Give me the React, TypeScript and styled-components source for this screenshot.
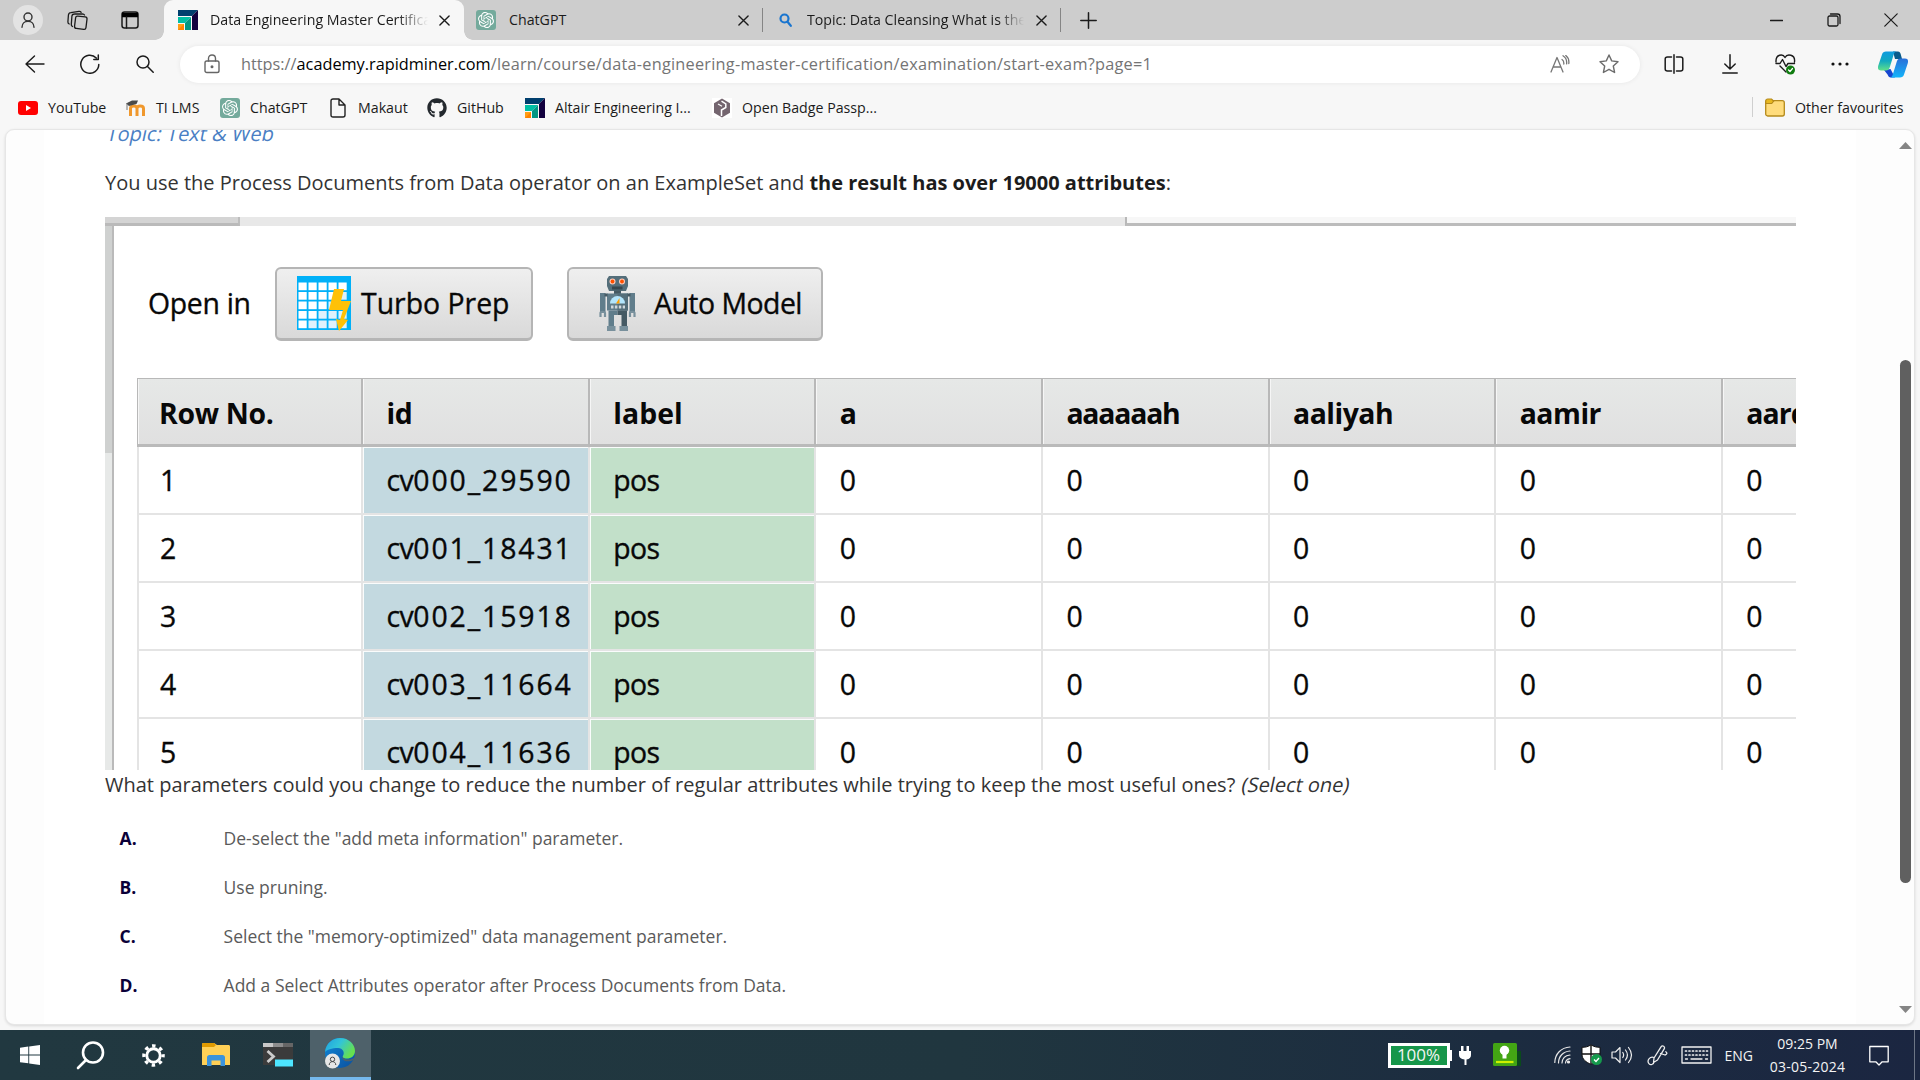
import React from "react";
import styled, { createGlobalStyle } from "styled-components";
import { SiOpenai } from "react-icons/si";
import { FaGithub } from "react-icons/fa";

const GlobalStyle = createGlobalStyle`
  * { box-sizing: border-box; }
  html, body { margin: 0; padding: 0; overflow: hidden; }
  body { font-family: "Open Sans", "Noto Sans", sans-serif; color: #1b1b1b; }
  svg { display: block; flex: none; }
`;

const Screen = styled.div`
  width: 1920px;
  height: 1080px;
  display: flex;
  flex-direction: column;
  background: #f7f7f7;
  overflow: hidden;
`;

/* ---------- tab strip ---------- */
const TabStrip = styled.div`
  height: 40px;
  display: flex;
  background: #cdcdcd;
`;
const StripTools = styled.div`
  width: 164px;
  height: 40px;
  display: flex;
  align-items: center;
  padding-left: 13px;
`;
const Avatar = styled.div`
  width: 30px;
  height: 30px;
  border-radius: 50%;
  background: #e3e3e3;
  display: grid;
  place-items: center;
`;
const Spacer = styled.div<{ $w: number }>`
  flex: none;
  width: ${(p) => p.$w}px;
`;
const Grow = styled.div`
  flex: 1;
`;
const Tab = styled.div<{ $w: number; $active?: boolean }>`
  width: ${(p) => p.$w}px;
  height: 40px;
  padding-left: ${(p) => (p.$active ? 14 : 12)}px;
  display: flex;
  align-items: center;
  font-size: 14.2px;
  background: ${(p) => (p.$active ? "#f7f7f7" : "transparent")};
  border-radius: 9px 9px 0 0;
`;
const TabLabel = styled.div<{ $w: number; $fade?: string }>`
  width: ${(p) => p.$w}px;
  line-height: 40px;
  white-space: nowrap;
  overflow: hidden;
  ${(p) => p.$fade && `mask-image: linear-gradient(to right, #000 ${p.$fade}, transparent);`}
`;
const StripFoot = styled.div`
  flex: none;
  width: 0;
  height: 40px;
  display: flex;
  align-items: flex-end;
`;
const Flare = styled.div<{ $side: "left" | "right" }>`
  flex: none;
  width: 9px;
  height: 9px;
  margin-left: ${(p) => (p.$side === "left" ? -9 : 0)}px;
  background: radial-gradient(
    circle at ${(p) => (p.$side === "left" ? "0 0" : "100% 0")},
    transparent 8.5px,
    #f7f7f7 9px
  );
`;
const TabRule = styled.div`
  width: 1px;
  height: 24px;
  align-self: center;
  background: #858585;
`;

/* ---------- toolbar ---------- */
const Toolbar = styled.div`
  height: 48px;
  padding: 0 12px 0 25px;
  display: flex;
  align-items: center;
`;
const AddressBar = styled.div`
  width: 1460px;
  height: 37px;
  border-radius: 19px;
  background: #fff;
  box-shadow: 0 0 5px rgba(0, 0, 0, 0.07);
  display: flex;
  align-items: center;
  padding: 0 21px 0 24px;
`;
const Url = styled.div`
  flex: 1;
  margin-left: 21px;
  font-size: 16.3px;
  line-height: 36px;
  white-space: nowrap;
  color: #747474;
`;
const Host = styled.span`
  color: #000;
`;
const UrlPath = styled.span`
  letter-spacing: 0.24px;
`;

/* ---------- favourites ---------- */
const Favourites = styled.div`
  height: 41px;
  padding: 0 18px;
  display: flex;
  align-items: flex-start;
  font-size: 14.2px;
`;
const Favourite = styled.div<{ $w: number }>`
  width: ${(p) => p.$w}px;
  height: 39px;
  display: flex;
  align-items: center;
  gap: 10px;
  white-space: nowrap;
`;
const FavIcon = styled.div<{ $bg?: string }>`
  width: 20px;
  height: 20px;
  flex: none;
  display: grid;
  place-items: center;
  border-radius: 3px;
  color: #fff;
  background: ${(p) => p.$bg ?? "transparent"};
`;
const FavRule = styled.div`
  width: 1px;
  height: 20px;
  margin: 9px 12px 0 0;
  background: #cfcfcf;
`;

/* ---------- page ---------- */
const PageFrame = styled.div`
  width: 1910px;
  height: 896px;
  margin: 0 0 5px 5px;
  display: flex;
  background: #fdfdfd;
  border-radius: 9px;
  overflow: hidden;
  border: 1px solid #e6e6e6;
  box-shadow: 0 1px 3px rgba(0, 0, 0, 0.12);
`;
const PageBody = styled.main`
  width: 1812px;
  margin-left: 38px;
  padding-left: 61px;
  background: #fff;
  overflow: hidden;
`;
const ScrollTrack = styled.div`
  flex: 1;
  padding: 12px 2px 11px 0;
  display: flex;
  flex-direction: column;
  align-items: flex-end;
`;
const ScrollThumb = styled.div`
  width: 11px;
  height: 523px;
  margin: 211px 1px auto 0;
  border-radius: 6px;
  background: #606060;
`;
const Slanted = styled.span<{ $shift?: number }>`
  display: inline-block;
  margin-left: ${(p) => p.$shift ?? 0}px;
  transform: skewX(-12deg);
`;
const Topic = styled.div`
  height: 37px;
  padding-left: 2px;
  margin-top: -11px;
  margin-bottom: 12px;
  font-size: 20px;
  line-height: 30px;
  color: #4b7fc4;
`;
const Question = styled.p<{ $h: number }>`
  margin: 0;
  height: ${(p) => p.$h}px;
  font-size: 20px;
  line-height: 30px;
  white-space: nowrap;
  color: #333;
`;
const Strong = styled.b`
  color: #1c1c1c;
`;
const Options = styled.div`
  display: grid;
  grid-auto-rows: 49px;
`;
const Option = styled.div`
  display: flex;
  align-items: center;
  padding-left: 14.600px;
  font-size: 17.5px;
  color: #5a5a5a;
`;
const Letter = styled.b`
  width: 104px;
  color: #0b0038;
`;

/* ---------- RapidMiner results panel ---------- */
const Figure = styled.div`
  width: 1691px;
  height: 553px;
  overflow: hidden;
  background: #fff;
`;
const PanelTabs = styled.div`
  height: 9px;
  display: flex;
  background: #e8e8e8;
`;
const PanelTabLeft = styled.div`
  width: 135px;
  background: #d4d4d4;
  border-right: 2px solid #bdbdbd;
  border-bottom: 3px solid #bababa;
`;
const PanelTabRight = styled.div`
  width: 671px;
  height: 9px;
  margin-left: auto;
  background: #f7f7f7;
  border-left: 2px solid #b8b8b8;
  border-bottom: 3px solid #bcbcbc;
`;
const PanelBody = styled.div`
  height: 544px;
  display: flex;
`;
const SideRail = styled.div`
  flex: none;
  width: 9px;
  border-right: 2px solid #bababa;
  background: linear-gradient(#cfd1d0 227px, #e7e9e8 227px);
`;
const PanelContent = styled.div`
  flex: none;
  width: 1682px;
  padding-left: 23px;
  overflow: hidden;
  font-size: 28.4px;
  color: #080808;
  -webkit-text-stroke: 0.35px #080808;
`;
const OpenIn = styled.div`
  height: 152px;
  padding: 41px 0 0 11px;
  display: flex;
  line-height: 73px;
  white-space: nowrap;
`;
const OpenLabel = styled.div`
  width: 127px;
  letter-spacing: -0.3px;
`;
const LaunchButton = styled.div<{ $w: number; $pad: number; $gap: number; $ls: number }>`
  width: ${(p) => p.$w}px;
  height: 74px;
  margin-right: 34px;
  padding-left: ${(p) => p.$pad}px;
  display: flex;
  align-items: center;
  gap: ${(p) => p.$gap}px;
  letter-spacing: ${(p) => p.$ls}px;
  border: 2px solid #b5b5b5;
  border-bottom-width: 3px;
  border-radius: 6px;
  background: linear-gradient(#efefef, #d9d9d9);
`;
const DataRow = styled.div<{ $head?: boolean }>`
  width: 1820px;
  height: ${(p) => (p.$head ? 69 : 68)}px;
  display: grid;
  grid-template-columns: 226px repeat(7, 226.65px);
`;
const HeadCell = styled.div<{ $ls: number }>`
  display: flex;
  align-items: center;
  padding: 2px 0 0 23.5px;
  font-weight: 700;
  -webkit-text-stroke: 0;
  letter-spacing: ${(p) => p.$ls}px;
  background: linear-gradient(#e6e8e7, #e0e0e0);
  border-top: 1.5px solid #b8b8b8;
  border-right: 2px solid #b8b8b8;
  border-bottom: 3px solid #bababa;
  box-shadow: inset 1px 0 #f6f6f6;
  &:first-child { border-left: 1px solid #b8b8b8; padding-left: 21px; }
`;
const Cell = styled.div<{ $tint?: string }>`
  display: flex;
  align-items: center;
  padding-left: 23.5px;
  letter-spacing: ${(p) => (p.$tint === "#c3d9e0" ? 1.9 : -0.5)}px;
  background: ${(p) => p.$tint ?? "#fff"};
  border-right: 2px solid #e4e4e4;
  border-bottom: 2px solid #e4e4e4;
  box-shadow: ${(p) => (p.$tint ? "inset 1px 1px #fafcfc" : "none")};
  &:first-child { border-left: 2px solid #e4e4e4; padding-left: 21px; }
`;
const Prefix = styled.span`
  letter-spacing: -0.5px;
`;

/* ---------- taskbar ---------- */
const Taskbar = styled.div`
  height: 50px;
  display: flex;
  align-items: center;
  padding-left: 20px;
  background: linear-gradient(90deg, #213840 0%, #20363f 50%, #1c2c40 78%, #1b2641 100%);
  color: #f4f4f4;
  font-size: 14px;
`;
const ActiveApp = styled.div`
  width: 61px;
  height: 50px;
  padding-left: 15px;
  display: flex;
  align-items: center;
  background: #4e616a;
  border-bottom: 3px solid #76b9ed;
`;
const Battery = styled.div`
  width: 62px;
  height: 25px;
  border: 3px solid #fff;
  background: #16964a;
  font-size: 17px;
  line-height: 18px;
  text-align: center;
`;
const BatteryTip = styled.div`
  width: 2px;
  height: 11px;
  background: #fff;
`;
const Clock = styled.div`
  width: 84px;
  line-height: 23px;
  text-align: center;
  padding-bottom: 1px;
`;
const DateText = styled.div`
  letter-spacing: 0.25px;
`;
const PeekEdge = styled.div`
  width: 1px;
  height: 50px;
  margin-right: 5px;
  background: #6d7686;
`;

type Stroke = { w: number; h: number; vb?: string; sw?: number; color?: string; children: React.ReactNode };
const Line = ({ w, h, vb, sw = 1.4, color = "#1b1b1b", children }: Stroke) => (
  <svg width={w} height={h} viewBox={vb ?? `0 0 ${w} ${h}`} fill="none" stroke={color} strokeWidth={sw} strokeLinecap="round" strokeLinejoin="round">
    {children}
  </svg>
);

const CloseX = ({ size = 11 }: { size?: number }) => (
  <Line w={size} h={size} vb="0 0 12 12" sw={1.5}><path d="M1 1l10 10M11 1L1 11" /></Line>
);
const AltairLogo = () => (
  <svg width="20" height="20" viewBox="0 0 20 20">
    <path d="M0 0h20l-6 6H0z" fill="#003f6e" />
    <path d="M20 0v20h-6V6z" fill="#12003e" />
    <path d="M0 7h13l-6 6H0z" fill="#00bfa5" />
    <path d="M13 7v13H7v-7z" fill="#009683" />
    <path d="M0 14h6v6H0z" fill="#ff9e16" />
    <path d="M6 14v6H0z" fill="#ff8200" />
  </svg>
);
const GptIcon = () => (
  <FavIcon $bg="#74aa9c"><SiOpenai size={16} /></FavIcon>
);
const MoodleIcon = () => (
  <svg width="20" height="18" viewBox="0 0 20 18">
    <path d="M4.500 17V9.500c0-3.500 6.500-3.500 6.500 0V17M11 9.500c0-3.500 6.500-3.500 6.500 0V17" fill="none" stroke="#f0982d" strokeWidth="3" />
    <path d="M0 4.500L6 1.500h6L10.500 5 3 7z" fill="#4a4a4a" />
    <path d="M1 4.500v6.500" stroke="#777" strokeWidth="1" />
  </svg>
);
const BadgeIcon = () => (
  <svg width="20" height="20" viewBox="0 0 20 20">
    <path d="M0 0h20v20H0z" fill="#fff" />
    <path d="M10 .5l8 4.800v9.500l-8 4.800-8-4.800V5.300z" fill="#74656f" />
    <path d="M9.500 3.200L13.800 5.800v3.700L9.500 12v6" fill="none" stroke="#fff" strokeWidth="1.500" />
    <path d="M6 6l4 2.200" stroke="#fff" strokeWidth="1.200" />
  </svg>
);
const FolderIcon = () => (
  <svg width="20" height="19" viewBox="0 0 20 19">
    <rect x=".7" y="2.700" width="18.600" height="15.300" rx="2" fill="#ffdc7c" stroke="#b58a1b" strokeWidth="1.300" />
    <path d="M.7 5.500V3c0-1.200.8-2 2-2h3.800l2.200 2-2 2.500z" fill="#e8b820" stroke="#b58a1b" strokeWidth="1.200" />
  </svg>
);
const Copilot = () => (
  <svg width="30" height="27" viewBox="0 0 30 27">
    <defs>
      <linearGradient id="cpA" x1="0" y1="0" x2="0" y2="1">
        <stop offset="0" stopColor="#0f9be0" /><stop offset=".5" stopColor="#12a9c0" /><stop offset="1" stopColor="#5fe08a" />
      </linearGradient>
      <linearGradient id="cpB" x1="0" y1="0" x2="0" y2="1">
        <stop offset="0" stopColor="#2a6fd8" /><stop offset="1" stopColor="#14b4fa" />
      </linearGradient>
    </defs>
    <path d="M15 .5h5c1.500 0 2.200 1 2.700 2.500L24 8h-7z" fill="#0a5c8c" />
    <path d="M6 19l6.500-1 4.500 8.500h-4c-2 0-2.800-1.200-3.300-2.800z" fill="#1747d0" />
    <path d="M8 .5h11c-2 0-2.700 1.200-3.300 3l-4 13c-.6 2-1.700 3-3.700 3H3c-3 0-3.500-2-2.700-5L4 3.500C4.700 1.300 6 .5 8 .5z" fill="url(#cpA)" />
    <path d="M22 26.500H11.500c2 0 2.700-1.200 3.300-3l4-13c.6-2 1.700-3 3.700-3H27c3 0 3.500 2 2.700 5l-3.700 11c-.7 2.200-2 3-4 3z" fill="url(#cpB)" />
  </svg>
);

const GridBolt = () => (
  <svg width="54" height="56" viewBox="0 0 54 56">
    <path d="M0 0h54v54H0z" fill="#00b0f8" />
    {[0, 1, 2, 3, 4].map((r) =>
      [0, 1, 2, 3, 4].map((c) => (
        <rect key={`${r}${c}`} x={1.5 + c * 10} y={6.5 + r * 9.5} width="8.200" height="7.700" fill={r + c > 4 ? "#dff1fb" : "#fff"} />
      )),
    )}
    <path d="M37 13h10l-3 12h10l-7 18 4 1-9 11-3-12 4 1 3-10H32z" fill="#ffc107" />
  </svg>
);
const Robot = () => (
  <svg width="37" height="55" viewBox="0 0 37 55">
    <path d="M10 0h17l2 3v7l-2 5H10L8 10V3z" fill="#546e7a" />
    <circle cx="13.500" cy="5.500" r="3" fill="#ffccbc" /><circle cx="23" cy="5.500" r="3" fill="#ffccbc" />
    <circle cx="13.500" cy="5.500" r="1.900" fill="#ff5100" /><circle cx="23" cy="5.500" r="1.900" fill="#ff5100" />
    <rect x="13" y="10.500" width="10.500" height="3" fill="#37474f" />
    <rect x="15" y="14.500" width="7" height="4" fill="#455a64" />
    <path d="M8 17.500h21v17H8z" fill="#607d8b" />
    <path d="M18.500 17.500H29v17H18.500z" fill="#546e7a" />
    <path d="M1 17h5.500v19H1zM30.500 17H36v19h-5.500z" fill="#607d8b" />
    <path d="M5.500 19h3M28.500 19h3" stroke="#455a64" strokeWidth="3" />
    <path d="M1.500 41v-4c0-1.500 4.500-1.500 4.500 0v4M31 41v-4c0-1.500 4.500-1.500 4.500 0v4" fill="none" stroke="#78909c" strokeWidth="2.200" />
    <path d="M11 27.500a7.500 7.500 0 0 1 15 0z" fill="#b3e5fc" />
    <path d="M17 27.500l3.500-5.500v5.500z" fill="#ffa000" />
    <path d="M12 31h14" stroke="#cfd8dc" strokeWidth="3" strokeDasharray="2.500 1.400" />
    <path d="M9.500 34.500h9V39H15v12H9.500z" fill="#607d8b" />
    <path d="M18.500 34.500H28V51h-5.500V39h-4z" fill="#455a64" />
    <path d="M8 50h8.500v5H8zM20.500 50H29v5h-8.500z" fill="#78909c" />
  </svg>
);

const Person = ({ w = 14, color = "#333" }: { w?: number; color?: string }) => (
  <Line w={w} h={w * 1.15} vb="0 0 14 16" color={color}><circle cx="7" cy="5" r="4" /><path d="M1 15.200c0-8 12-8 12 0" /></Line>
);

const heads: [string, number][] = [
  ["Row No.", -0.3], ["id", -0.3], ["label", 0.1], ["a", 0], ["aaaaaah", -1.2], ["aaliyah", -0.5], ["aamir", -0.5], ["aardvark", -0.9],
];
const ids = ["000_29590", "001_18431", "002_15918", "003_11664", "004_11636"];
const zeros = ["a", "aaaaaah", "aaliyah", "aamir", "aardvark"];
const options = [
  ["A.", 'De-select the "add meta information" parameter.'],
  ["B.", "Use pruning."],
  ["C.", 'Select the "memory-optimized" data management parameter.'],
  ["D.", "Add a Select Attributes operator after Process Documents from Data."],
];

const Tabs = () => (
  <TabStrip>
    <StripTools>
      <Avatar><Person /></Avatar>
      <Spacer $w={23} />
      <Line w={22} h={21} sw={1.3}>
        <rect x="9" y="6.500" width="11.500" height="12.500" rx="2" transform="rotate(7 15 13)" />
        <path d="M6.500 16.500c-1-.5-1.300-1.200-1.200-2l.6-8.200C6 4.800 7 4 8.300 4l8.200-.2c1 0 1.600.4 2 1.200" />
        <path d="M3.200 14c-1-.5-1.400-1.200-1.300-2.200l.5-6.600C2.500 3.600 3.400 2.700 4.800 2.600L13 1.300c1-.1 1.700.2 2.200 1" />
      </Line>
      <Spacer $w={33} />
      <Line w={18} h={18} sw={1.5}>
        <rect x="1" y="1" width="16" height="16" rx="2.500" /><path d="M1 3h16M1 5h16" strokeWidth="2.500" stroke="#000" strokeLinecap="butt" /><path d="M5.500 6v11" />
      </Line>
    </StripTools>
    <StripFoot><Flare $side="left" /></StripFoot>
    <Tab $w={300} $active>
      <AltairLogo />
      <Spacer $w={12} />
      <TabLabel $w={218} $fade="86%">Data Engineering Master Certification</TabLabel>
      <Spacer $w={11} />
      <CloseX />
    </Tab>
    <StripFoot><Flare $side="right" /></StripFoot>
    <Tab $w={298}>
      <GptIcon />
      <Spacer $w={13} />
      <TabLabel $w={218}>ChatGPT</TabLabel>
      <Spacer $w={11} />
      <CloseX />
    </Tab>
    <TabRule />
    <Tab $w={297}>
      <Spacer $w={4} />
      <Line w={13} h={14} sw={2.2} color="#1a75cf"><circle cx="5.500" cy="5.500" r="4" /><path d="M8.500 8.800l3.300 4" /></Line>
      <Spacer $w={15} />
      <TabLabel $w={217} $fade="88%">Topic: Data Cleansing What is the</TabLabel>
      <Spacer $w={12} />
      <CloseX />
    </Tab>
    <TabRule />
    <Spacer $w={7} />
    <Tab $w={40}><Line w={17} h={17} sw={1.5}><path d="M8.500 .8v15.400M.8 8.500h15.400" /></Line></Tab>
    <Grow />
    <Tab $w={57}><Line w={13} h={13} sw={1.3}><path d="M.5 6.500h12" /></Line></Tab>
    <Tab $w={57}><Line w={14} h={14} sw={1.3}><rect x="1" y="3" width="10" height="10" rx="1.500" /><path d="M3.500 1h7c1.600 0 2.500.9 2.500 2.500v7" /></Line></Tab>
    <Tab $w={48}><Line w={14} h={14} sw={1.2}><path d="M.8.800l12.400 12.400M13.200.800L.800 13.200" /></Line></Tab>
  </TabStrip>
);

const AddressRow = () => (
  <Toolbar>
    <Line w={20} h={18}><path d="M19 9H1M9.500 1L1 9l8.500 8" /></Line>
    <Spacer $w={35} />
    <Line w={20} h={20} sw={1.5}><path d="M18.800 10.500a9 9 0 1 1-2.500-6.500M18.300 1v4.500h-4.500" /></Line>
    <Spacer $w={36} />
    <Line w={18} h={18} sw={1.5}><circle cx="7" cy="7" r="6" /><path d="M11.500 11.500l5.700 5.700" /></Line>
    <Spacer $w={26} />
    <AddressBar>
      <Line w={16} h={20} color="#666"><rect x="1" y="7" width="14" height="11.500" rx="1.800" /><path d="M4.500 7V4.500C4.500-.2 11.500-.2 11.500 4.500V7" /><circle cx="8" cy="12.700" r=".8" fill="#555" /></Line>
      <Url>https://<Host>academy.rapidminer.com</Host><UrlPath>/learn/course/data-engineering-master-certification/examination/start-exam?page=1</UrlPath></Url>
      <Line w={20} h={18} color="#767676" sw={1.3}><path d="M1 17L7 2.500 13 17M3 12h8M12 4.500c1.500 1 2 2.800 1.800 4.500M13 .8c3.200 2 4 4.700 3.600 8M15.800.5c2.500 2 3.400 5 3 8" /></Line>
      <Spacer $w={29} />
      <Line w={20} h={20} color="#6c6c6c"><path d="M10 1l2.700 5.900 6.300.8-4.700 4.300 1.300 6.500L10 15.300 4.400 18.500l1.300-6.500L1 7.700l6.300-.8z" /></Line>
    </AddressBar>
    <Spacer $w={24} />
    <Line w={20} h={20} sw={1.5}><path d="M7.500 3H3.500C2 3 1.200 3.800 1.200 5v10c0 1.300.8 2 2.300 2h4M12.500 3h4C18 3 18.800 3.800 18.800 5v10c0 1.300-.8 2-2.300 2h-4M10 .8v18.400" /></Line>
    <Spacer $w={38} />
    <Line w={16} h={20} sw={1.5}><path d="M8 .8v14M2.800 10L8 15l5.200-5M.8 19h14.400" /></Line>
    <Spacer $w={37} />
    <Line w={21} h={21} sw={1.4}>
      <path d="M1 8C.5 0 8-.5 10 3.500 12-.5 20.500 0 19.500 8M1 9.500h4l2.500-4 3.500 7 2-3h6.500M5 12l6 6" />
      <circle cx="15.500" cy="16" r="4.500" fill="#107c10" stroke="none" /><path d="M13.500 16l1.500 1.500 2.500-3" stroke="#fff" strokeWidth="1.200" />
    </Line>
    <Spacer $w={35} />
    <svg width="18" height="4" viewBox="0 0 18 4" fill="#111"><circle cx="2" cy="2" r="1.600" /><circle cx="9" cy="2" r="1.600" /><circle cx="16" cy="2" r="1.600" /></svg>
    <Spacer $w={29} />
    <Copilot />
  </Toolbar>
);

const FavouritesRow = () => (
  <Favourites>
    <Favourite $w={108}>
      <svg width="20" height="14" viewBox="0 0 20 14"><rect width="20" height="14" rx="3" fill="#f00" /><path d="M8 4l5 3-5 3z" fill="#fff" /></svg>YouTube
    </Favourite>
    <Favourite $w={94}><MoodleIcon />TI LMS</Favourite>
    <Favourite $w={108}><GptIcon />ChatGPT</Favourite>
    <Favourite $w={99}>
      <FavIcon><Line w={16} h={20} color="#222"><path d="M3 1h6l6 6v10c0 1.300-.7 2-2 2H3c-1.300 0-2-.7-2-2V3c0-1.300.7-2 2-2zM9 1v6h6" /></Line></FavIcon>Makaut
    </Favourite>
    <Favourite $w={98}><FaGithub size={20} color="#24292e" />GitHub</Favourite>
    <Favourite $w={187}><AltairLogo />Altair Engineering I...</Favourite>
    <Favourite $w={180}><BadgeIcon />Open Badge Passp...</Favourite>
    <Grow />
    <FavRule />
    <Favourite $w={137}><FolderIcon />Other favourites</Favourite>
  </Favourites>
);

const ResultsPanel = () => (
  <Figure>
    <PanelTabs><PanelTabLeft /><PanelTabRight /></PanelTabs>
    <PanelBody>
      <SideRail />
      <PanelContent>
        <OpenIn>
          <OpenLabel>Open in</OpenLabel>
          <LaunchButton $w={258} $pad={20} $gap={10} $ls={0}><GridBolt />Turbo Prep</LaunchButton>
          <LaunchButton $w={256} $pad={30} $gap={18} $ls={-0.5}><Robot />Auto Model</LaunchButton>
        </OpenIn>
        <DataRow $head>
          {heads.map(([name, ls]) => <HeadCell key={name} $ls={ls}>{name}</HeadCell>)}
        </DataRow>
        {ids.map((id, i) => (
          <DataRow key={id}>
            <Cell>{i + 1}</Cell>
            <Cell $tint="#c3d9e0"><Prefix>cv</Prefix>{id}</Cell>
            <Cell $tint="#c2e0c9">pos</Cell>
            {zeros.map((z) => <Cell key={z}>0</Cell>)}
          </DataRow>
        ))}
      </PanelContent>
    </PanelBody>
  </Figure>
);

const TaskbarRow = () => (
  <Taskbar>
    <svg width="20" height="20" viewBox="0 0 20 20" fill="#fff"><path d="M0 2.800L8.300 1.600v7.900H0zM9.200 1.500L20 0v9.500H9.200zM0 10.400h8.300v7.900L0 17.200zM9.200 10.400H20V20L9.200 18.500z" /></svg>
    <Spacer $w={36} />
    <Line w={29} h={29} sw={2.6} color="#fff"><circle cx="17" cy="11.500" r="10" /><path d="M10 19l-8 8" /></Line>
    <Spacer $w={37} />
    <svg width="23" height="23" viewBox="0 0 24 24" fill="none" stroke="#fff"><circle cx="12" cy="12" r="7" strokeWidth="3" /><circle cx="12" cy="12" r="10" strokeWidth="3.500" strokeDasharray="3.600 4.254" strokeDashoffset="1.800" /></svg>
    <Spacer $w={37} />
    <svg width="28" height="24" viewBox="0 0 28 24">
      <path d="M0 1.500C0 .6.600 0 1.500 0H12l3 2h11.500c.9 0 1.500.6 1.500 1.500V22H0z" fill="#ffd056" />
      <path d="M0 4V1.500C0 .6.600 0 1.500 0H12l2 2-2 2z" fill="#e09a00" />
      <path d="M5 23V14.500c0-1.500 1-2.500 2.500-2.500h13c1.500 0 2.500 1 2.500 2.500V23h-4.500v-5.500h-9V23z" fill="#3b93dc" />
    </svg>
    <Spacer $w={33} />
    <svg width="30" height="24" viewBox="0 0 30 24">
      <path d="M0 2.500h30V22H0z" fill="#3b3b3b" /><path d="M0 0h30v4H0z" fill="#8d8d8d" /><path d="M0 0h10v4H0z" fill="#c8c8c8" /><path d="M20 0h10v4H20z" fill="#666" />
      <path d="M4.500 8l6 5.500-6 5.500" fill="none" stroke="#ccc" strokeWidth="2.800" /><path d="M12 16.500h18V23.500H12z" fill="#4de5ff" />
    </svg>
    <Spacer $w={17} />
    <ActiveApp>
      <svg width="30" height="31" viewBox="0 0 30 31">
        <defs>
          <linearGradient id="edA" x1="0" y1="0" x2="1" y2=".5"><stop offset="0" stopColor="#1f9fe0" /><stop offset=".5" stopColor="#32c4d8" /><stop offset="1" stopColor="#67e04e" /></linearGradient>
          <linearGradient id="edB" x1="0" y1="0" x2="1" y2="1"><stop offset="0" stopColor="#1088d8" /><stop offset="1" stopColor="#0a4f9e" /></linearGradient>
        </defs>
        <circle cx="15" cy="15" r="15" fill="url(#edB)" />
        <path d="M0 14C1 5 8 0 15 0c9 0 15 6.500 15 13 0 5-4 7.500-8 7.500-3.500 0-5-1.200-4-2.800 2-3 0-7.700-5-7.700C7 10 1.500 12 0 14z" fill="url(#edA)" />
        <path d="M17.500 18c0 2 2.500 3.500 5.500 3.500 3 0 5-.5 7-2.500v2c-3 2.500-8 3-11 1.500-1.500-1-2-3-1.500-4.500z" fill="#4e616a" />
        <circle cx="7.500" cy="23" r="7.500" fill="#e6e6e6" />
        <g fill="none" stroke="#444" strokeWidth="1"><circle cx="7.500" cy="21.300" r="2.200" /><path d="M4.200 27c0-4.500 6.600-4.500 6.600 0" /></g>
      </svg>
    </ActiveApp>
    <Grow />
    <Battery>100%</Battery><BatteryTip />
    <Spacer $w={7} />
    <svg width="12" height="19" viewBox="0 0 12 19" fill="#fff"><path d="M2 0h2.500v5h3V0H10v5h2v4c0 2.500-1.500 4-4.500 4.500V19h-2v-5.500C2 13 0 11.500 0 9V5h2z" /></svg>
    <Spacer $w={22} />
    <svg width="28" height="24" viewBox="0 0 28 24"><path d="M20 8h8v15h-8z" fill="#0a4a1c" /><rect width="24" height="23" rx="1.500" fill="#43a514" /><circle cx="11.500" cy="7.500" r="4.700" fill="#fff" /><path d="M9.500 11h4v4.500h-4z" fill="#fff" /><path d="M3 19h17.500" stroke="#cdf000" strokeWidth="2.200" /></svg>
    <Spacer $w={33} />
    <Line w={17} h={18} color="#e8e8e8" sw={1.2}><path d="M.8 16.500C1 8 7 1.500 16 1M4.500 17C4.500 10.500 9 5.500 16 5M8 17c.3-4.500 3.500-7.500 8-8M11.500 17c.3-2.500 2-4 4.500-4.300" /><circle cx="14.500" cy="16" r="1" fill="#fff" /></Line>
    <Spacer $w={10} />
    <svg width="22" height="22" viewBox="0 0 22 22"><path d="M10 .8c3 2 5.500 2.500 9 2.500v7c0 5-4 8-9 10-5-2-9-5-9-10v-7c3.500 0 6-.5 9-2.500z" fill="#fff" stroke="#111" /><path d="M10 1v19M1 10h18" stroke="#111" strokeWidth="1.400" /><circle cx="15.500" cy="15.500" r="5.500" fill="#159a4c" /><path d="M13 15.500l2 2 3-3.500" fill="none" stroke="#fff" strokeWidth="1.300" /></svg>
    <Spacer $w={8} />
    <Line w={22} h={18} color="#eee" sw={1.2}><path d="M1 6v6h3.500L9 16.500v-15L4.500 6zM11.800 6.500c1 1.500 1 3.500 0 5M14.500 4c2.300 3 2.300 7 0 10M17.500 1.500c4 5 4 10 0 15" /></Line>
    <Spacer $w={14} />
    <Line w={21} h={21} color="#eee" sw={1.3}><path d="M7 13L14 1.800c1.500-2 4.500 0 3.200 2L10.500 15 6.500 17.500zM7 12.500c-4-1.500-7 2.500-5.500 5.500s5.500 1.500 5.500-1.500M13.500 8.500l4.500 1.500c2-.5 2.500-2 .8-3.200" /></Line>
    <Spacer $w={13} />
    <Line w={31} h={18} color="#f2f2f2" sw={1.3}><rect x="1" y="1" width="29" height="16" /><path d="M4.500 5h22M4.500 9h22" strokeDasharray="1 2.500" strokeWidth="1.700" /><path d="M4.500 13h2M10 13h11M24.500 13h2" /></Line>
    <Spacer $w={13} />
    <span>ENG</span>
    <Spacer $w={12.5} />
    <Clock>09:25 PM<DateText>03-05-2024</DateText></Clock>
    <Spacer $w={19.5} />
    <Line w={20} h={21} color="#fff" sw={1.3}><path d="M.8 1.500h18.400v15.300h-6L10 20l-3.200-3.200h-6z" /></Line>
    <Spacer $w={25} />
    <PeekEdge />
  </Taskbar>
);

export default function App() {
  return (
    <Screen>
      <GlobalStyle />
      <Tabs />
      <AddressRow />
      <FavouritesRow />
      <PageFrame>
        <PageBody>
          <Topic><Slanted>Topic: Text &amp; Web</Slanted></Topic>
          <Question $h={49}>
            You use the Process Documents from Data operator on an ExampleSet and <Strong>the result has over 19000 attributes</Strong>:
          </Question>
          <ResultsPanel />
          <Question $h={43}>
            What parameters could you change to reduce the number of regular attributes while trying to keep the most useful ones? <Slanted $shift={2}>(Select one)</Slanted>
          </Question>
          <Options>
            {options.map(([k, text]) => <Option key={k}><Letter>{k}</Letter>{text}</Option>)}
          </Options>
        </PageBody>
        <ScrollTrack>
          <svg width="13" height="7" viewBox="0 0 13 7"><path d="M6.500 0L13 7H0z" fill="#858585" /></svg>
          <ScrollThumb />
          <svg width="13" height="7" viewBox="0 0 13 7"><path d="M0 0h13L6.500 7z" fill="#858585" /></svg>
        </ScrollTrack>
      </PageFrame>
      <TaskbarRow />
    </Screen>
  );
}
